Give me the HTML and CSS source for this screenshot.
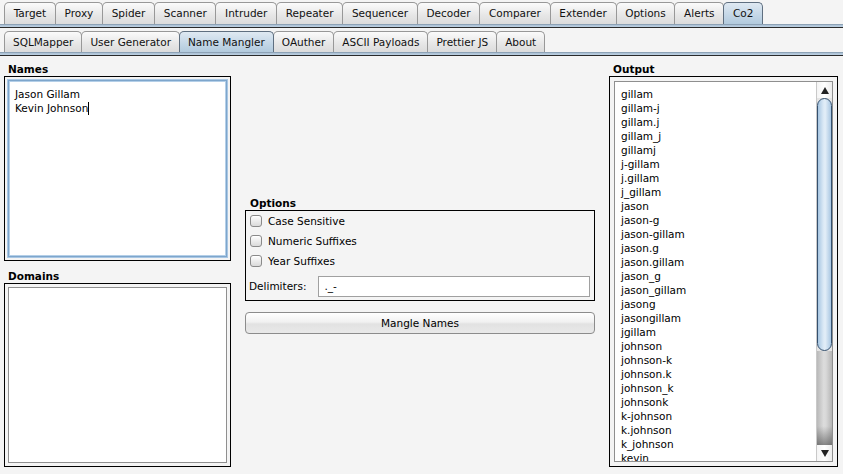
FILE: index.html
```html
<!DOCTYPE html>
<html>
<head>
<meta charset="utf-8">
<link rel="stylesheet" href="styles.css">
</head>
<body>
<div class="app">
  <div class="tabbar main">
    <div class="tabs">
      <div class="tab">Target</div>
      <div class="tab">Proxy</div>
      <div class="tab">Spider</div>
      <div class="tab">Scanner</div>
      <div class="tab">Intruder</div>
      <div class="tab">Repeater</div>
      <div class="tab">Sequencer</div>
      <div class="tab">Decoder</div>
      <div class="tab">Comparer</div>
      <div class="tab">Extender</div>
      <div class="tab">Options</div>
      <div class="tab">Alerts</div>
      <div class="tab active">Co2</div>
    </div>
    <div class="band"></div>
  </div>
  <div class="tabbar sub">
    <div class="tabs">
      <div class="tab">SQLMapper</div>
      <div class="tab">User Generator</div>
      <div class="tab active">Name Mangler</div>
      <div class="tab">OAuther</div>
      <div class="tab">ASCII Payloads</div>
      <div class="tab">Prettier JS</div>
      <div class="tab">About</div>
    </div>
    <div class="band"></div>
  </div>

  <div class="content">
    <div class="col col-left">
      <div class="label">Names</div>
      <div class="frame frame-names">
        <div class="textbox focused">Jason Gillam<br>Kevin Johnson<span class="caret"></span></div>
      </div>
      <div class="label label-domains">Domains</div>
      <div class="frame frame-domains">
        <div class="textbox"></div>
      </div>
    </div>

    <div class="col col-mid">
      <div class="label">Options</div>
      <div class="frame frame-options">
        <div class="check-row"><span class="checkbox"></span><span>Case Sensitive</span></div>
        <div class="check-row"><span class="checkbox"></span><span>Numeric Suffixes</span></div>
        <div class="check-row"><span class="checkbox"></span><span>Year Suffixes</span></div>
        <div class="delim-row">
          <span class="delim-label">Delimiters:</span>
          <div class="input">._-</div>
        </div>
      </div>
      <div class="button">Mangle Names</div>
    </div>

    <div class="col col-right">
      <div class="label">Output</div>
      <div class="frame frame-output">
        <div class="listbox">
          <div class="list">
            <div>gillam</div>
            <div>gillam-j</div>
            <div>gillam.j</div>
            <div>gillam_j</div>
            <div>gillamj</div>
            <div>j-gillam</div>
            <div>j.gillam</div>
            <div>j_gillam</div>
            <div>jason</div>
            <div>jason-g</div>
            <div>jason-gillam</div>
            <div>jason.g</div>
            <div>jason.gillam</div>
            <div>jason_g</div>
            <div>jason_gillam</div>
            <div>jasong</div>
            <div>jasongillam</div>
            <div>jgillam</div>
            <div>johnson</div>
            <div>johnson-k</div>
            <div>johnson.k</div>
            <div>johnson_k</div>
            <div>johnsonk</div>
            <div>k-johnson</div>
            <div>k.johnson</div>
            <div>k_johnson</div>
            <div>kevin</div>
          </div>
          <div class="scrollbar">
            <div class="sb-btn sb-up"><span class="tri-up"></span></div>
            <div class="sb-thumb"></div>
            <div class="sb-track"></div>
            <div class="sb-btn sb-down"><span class="tri-down"></span></div>
          </div>
        </div>
      </div>
    </div>
  </div>
</div>
</body>
</html>
```

FILE: styles.css
```css
* { box-sizing: border-box; }
html, body { margin: 0; padding: 0; }
body {
  background: #f4f4f4;
  font-family: "DejaVu Sans", "Noto Sans", sans-serif;
  font-size: 10.5px;
  color: #000;
  overflow: hidden;
}
.app {
  display: flex;
  flex-direction: column;
  height: 474px;
}

/* tabs */
.tabbar.main { padding-top: 2px; }
.tabbar.sub { padding-top: 3px; }
.tabs {
  display: flex;
  align-items: flex-end;
  padding-left: 4px;
}
.tab {
  height: 22px;
  line-height: 21px;
  padding: 0 8.7px;
  border: 1px solid #989898;
  border-bottom: none;
  border-radius: 5px 5px 0 0;
  background: linear-gradient(#fbfbfb, #e6e6e6 60%, #dcdcdc);
  margin-right: -1px;
  white-space: nowrap;
  color: #111;
}
.tabbar.sub .tab { height: 21px; line-height: 20px; padding: 0 8px; }
.tab.active {
  background: linear-gradient(#dfe9f2, #c3d6e6 60%, #b2cadd);
  border-color: #5f6f80;
  position: relative;
  z-index: 1;
}
.band {
  height: 4px;
  background: linear-gradient(#a9bfd3, #bdd1e3);
  border-top: 1px solid #8da2b6;
  border-bottom: 1px solid #2a2a2a;
}

/* content */
.content {
  flex: 1;
  min-height: 0;
  display: flex;
  gap: 14px;
  padding: 6px 5px 7px 4px;
}
.col { display: flex; flex-direction: column; min-height: 0; }
.col-left { width: 227px; }
.col-mid { width: 350px; justify-content: center; }
.col-right { width: 229px; }

.label {
  font-weight: bold;
  height: 14px;
  line-height: 14px;
  padding-left: 4px;
  flex: none;
}
.label-domains { margin-top: 8px; }
.col-mid .label { padding-left: 5px; }

.frame {
  border: 1px solid #000;
}
.frame-names, .frame-domains {
  height: 185px;
  padding: 3px;
  display: flex;
}
.textbox {
  flex: 1;
  background: #fff;
  border: 1px solid #8f8f8f;
  padding: 6px 5px 6px 6px;
  line-height: 14px;
}
.textbox.focused {
  border-color: #7ea6cc;
  box-shadow: 0 0 0 1px #a9c7e4, inset 0 0 0 1px #b4cfe8;
}
.caret {
  display: inline-block;
  width: 1px;
  height: 13px;
  background: #000;
  vertical-align: -3px;
}

/* options */
.frame-options {
  height: 91px;
  padding: 0 4px 0 3px;
}
.check-row {
  height: 20px;
  display: flex;
  align-items: center;
  gap: 6px;
  padding-left: 1px;
}
.checkbox {
  width: 12px;
  height: 12px;
  border: 1px solid #8a8a8a;
  border-radius: 3px;
  background: linear-gradient(#ffffff, #ececec 50%, #dadada);
  box-shadow: inset 0 1px 0 #fff;
}
.delim-row {
  display: flex;
  align-items: center;
  gap: 12px;
  margin-top: 5px;
}
.input {
  flex: 1;
  height: 21px;
  background: #fff;
  border: 1px solid #a0a0a0;
  line-height: 19px;
  padding-left: 5px;
}
.button {
  margin-top: 11px;
  height: 22px;
  border: 1px solid #8c8c8c;
  border-radius: 4px;
  background: linear-gradient(#ffffff, #f1f1f1 45%, #e2e2e2 55%, #e9e9e9);
  text-align: center;
  line-height: 20px;
}

/* output */
.frame-output {
  flex: 1;
  min-height: 0;
  padding: 4px;
  display: flex;
}
.listbox {
  flex: 1;
  min-height: 0;
  display: flex;
  background: #fff;
  border: 1px solid #8f8f8f;
  overflow: hidden;
}
.list {
  flex: 1;
  min-height: 0;
  padding: 5px 6px;
  line-height: 14px;
  overflow: hidden;
}
.scrollbar {
  width: 16px;
  display: flex;
  flex-direction: column;
  border-left: 1px solid #c9c9c9;
  background: #e4e4e4;
}
.sb-btn {
  height: 16px;
  flex: none;
  display: flex;
  align-items: center;
  justify-content: center;
  background: linear-gradient(90deg, #f4f4f4, #ffffff 50%, #ececec);
}
.tri-up {
  width: 0; height: 0;
  border-left: 4px solid transparent;
  border-right: 4px solid transparent;
  border-bottom: 7px solid #222;
}
.tri-down {
  width: 0; height: 0;
  border-left: 4px solid transparent;
  border-right: 4px solid transparent;
  border-top: 7px solid #222;
}
.sb-thumb {
  height: 253px;
  flex: none;
  border: 1px solid #34506e;
  border-radius: 8px;
  background: linear-gradient(90deg, #a7c6e2, #d9e8f5 40%, #e3eef8 55%, #a9c7e2);
}
.sb-track {
  flex: 1;
  background:
    linear-gradient(rgba(0,0,0,0) 80%, rgba(60,60,60,0.55)),
    linear-gradient(90deg, #b9b9b9, #dcdcdc 45%, #d8d8d8 60%, #b5b5b5);
}
```
